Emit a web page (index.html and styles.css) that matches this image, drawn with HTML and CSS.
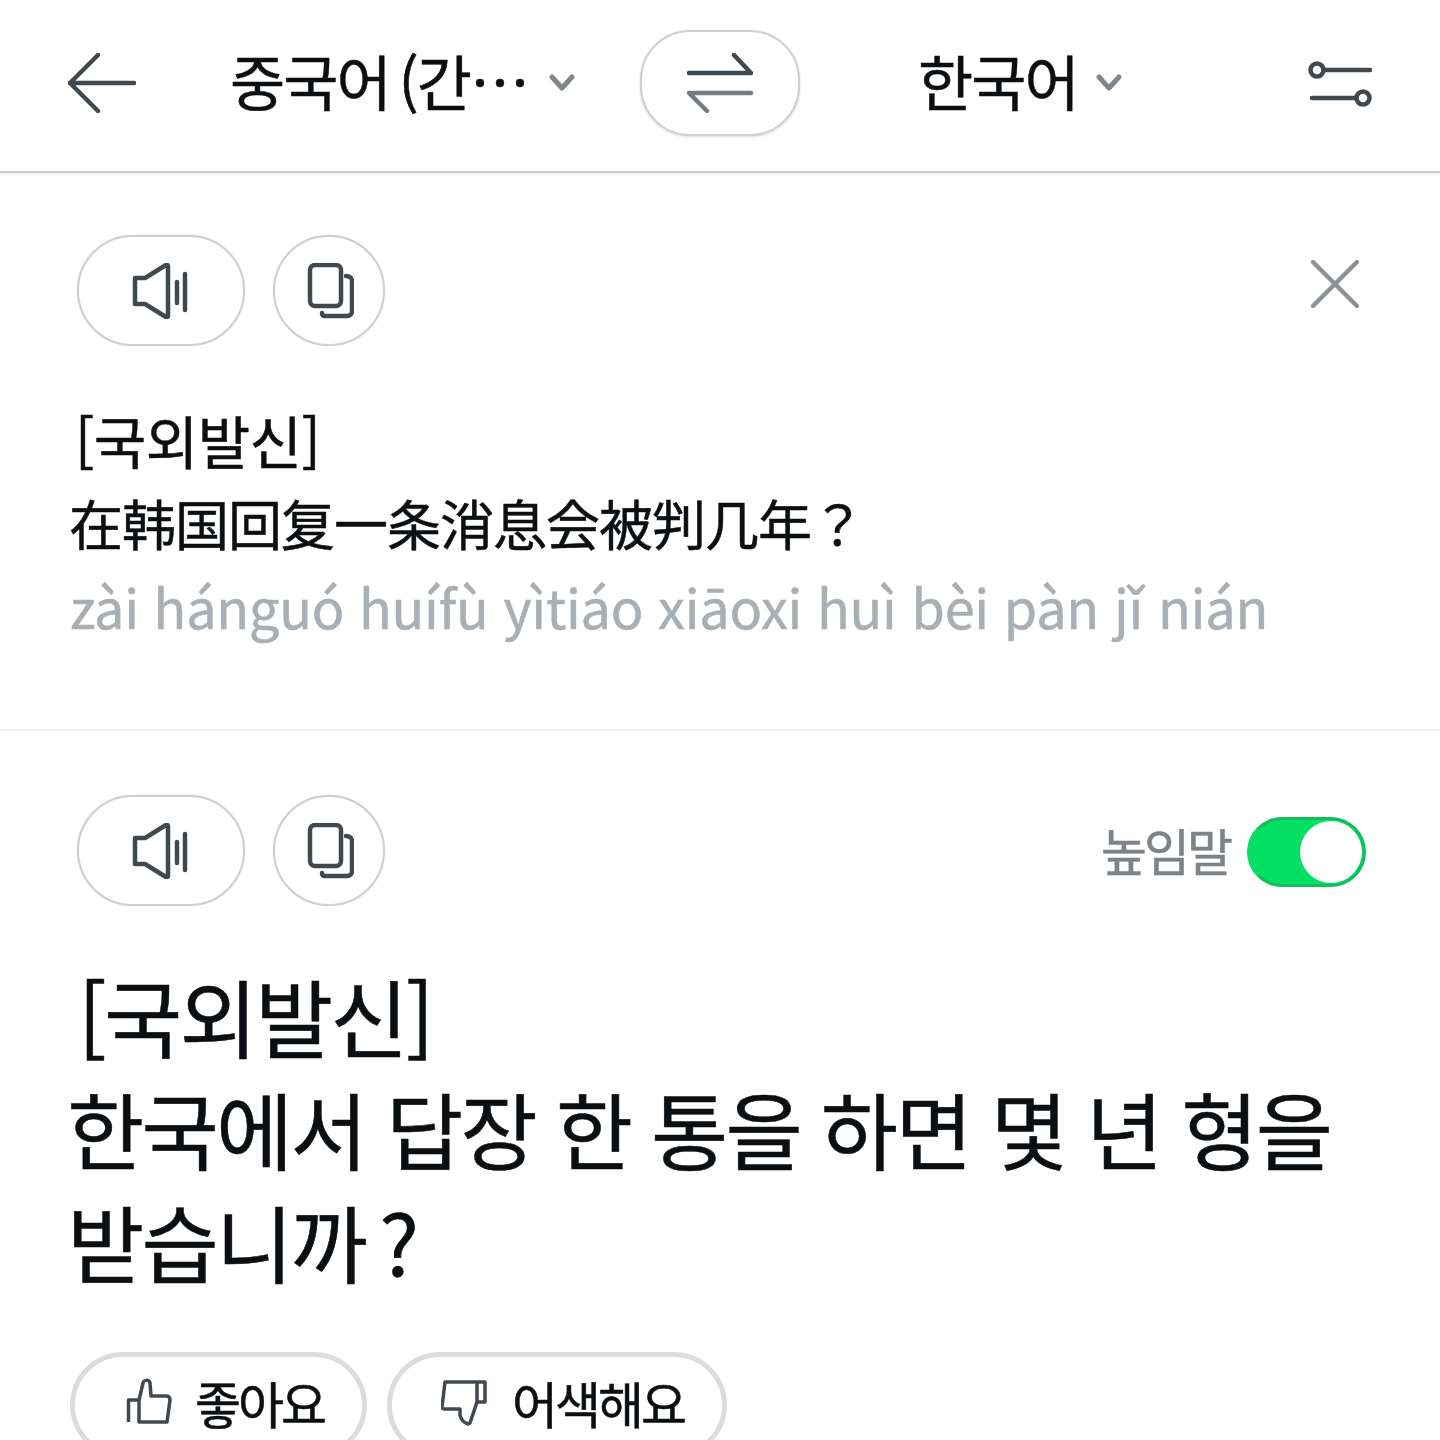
FILE: index.html
```html
<!DOCTYPE html>
<html lang="ko">
<head>
  <meta charset="UTF-8" />
  <meta name="viewport" content="width=device-width, initial-scale=1.0" />
  <title>번역</title>
  <link rel="stylesheet" href="styles.css">
</head>
<body>
  <div class="page">
    <header class="topbar">
      <svg class="back-icon" width="68" height="60" viewBox="0 0 68 60"><path d="M30 2 2 30l28 28M2 30h64"/></svg>
      <div class="lang lang-source">중국어 (간…</div>
      <svg class="chev chev-source" width="26" height="18" viewBox="0 0 26 18"><path d="M3 3l10 11L23 3"/></svg>
      <button class="swap-btn">
        <svg class="swap-icon" width="66" height="60" viewBox="0 0 66 60"><path class="dark" d="M2 20h62L47 2"/><path class="light" d="M64 40H2l18 18"/></svg>
      </button>
      <div class="lang lang-target">한국어</div>
      <svg class="chev chev-target" width="26" height="18" viewBox="0 0 26 18"><path d="M3 3l10 11L23 3"/></svg>
      <svg class="filter-icon" width="64" height="48" viewBox="0 0 64 48"><circle cx="9" cy="9" r="6.5"/><path d="M16 9h46M4 37h44"/><circle cx="55" cy="37" r="6.5"/></svg>
    </header>

    <section class="source">
      <div class="tools">
        <button class="round-btn wide">
          <svg width="58" height="56" viewBox="0 0 58 56"><path d="M3 15h10L34 2c1-.5 2 0 2 1v50c0 1-1 1.500-2 1L13 41H3z"/><path d="M45 19v21M53 11v36"/></svg>
        </button>
        <button class="round-btn">
          <svg width="50" height="56" viewBox="0 0 50 56"><rect x="6" y="2" width="31" height="41" rx="5"/><path d="M42 13c3 0 6 2 6 5v30c0 3-2 5-5 5H21c-2 0-3-1-3-3"/></svg>
        </button>
        <svg class="close-icon" width="48" height="48" viewBox="0 0 48 48"><path d="M2 2l44 44M46 2 2 46"/></svg>
      </div>
      <div class="source-text">
        <p class="tag">[국외발신]</p>
        <p class="hanzi">在韩国回复一条消息会被判几年？</p>
        <p class="pinyin">zài hánguó huífù yìtiáo xiāoxi huì bèi pàn jǐ nián</p>
      </div>
    </section>

    <section class="result">
      <div class="tools">
        <button class="round-btn wide">
          <svg width="58" height="56" viewBox="0 0 58 56"><path d="M3 15h10L34 2c1-.5 2 0 2 1v50c0 1-1 1.500-2 1L13 41H3z"/><path d="M45 19v21M53 11v36"/></svg>
        </button>
        <button class="round-btn">
          <svg width="50" height="56" viewBox="0 0 50 56"><rect x="6" y="2" width="31" height="41" rx="5"/><path d="M42 13c3 0 6 2 6 5v30c0 3-2 5-5 5H21c-2 0-3-1-3-3"/></svg>
        </button>
        <div class="honorific">
          <span>높임말</span>
          <div class="toggle"><div class="knob"></div></div>
        </div>
      </div>
      <div class="result-text">
        <p class="tag">[국외발신]</p>
        <p class="sentence">한국에서 답장 한 통을 하면 몇 년 형을 받습니까&#8201;?</p>
      </div>
      <div class="feedback">
        <button class="vote vote-good">
          <svg width="46" height="48" viewBox="0 0 46 48"><path d="M13 44V22L17 5c.5-3 6-4 7 0l1 13h15c3 0 4 2 4 4l-3 22zM2.500 44V22H13"/></svg>
          <span>좋아요</span>
        </button>
        <button class="vote vote-bad">
          <svg width="46" height="48" viewBox="0 0 46 48"><path d="M4 4L1 29c0 1 1 2 2 2h16v6c1 5 5 8 8 9l2-1 7-21V4zM36 24h8V4h-8"/></svg>
          <span>어색해요</span>
        </button>
      </div>
    </section>
  </div>
</body>
</html>
```
FILE: styles.css
```css
* {
  box-sizing: border-box;
  margin: 0;
  padding: 0;
  font-family: "Noto Sans CJK KR", "Noto Sans", sans-serif;
}

body {
  background: #fff;
  color: #0c0f11;
  -webkit-text-stroke: 0.5px currentColor;
}

.page {
  width: 1440px;
  height: 1440px;
  overflow: hidden;
}

svg {
  display: block;
  fill: none;
  stroke: #42494e;
  stroke-width: 4.5;
  stroke-linecap: round;
  stroke-linejoin: round;
}

button {
  background: #fff;
  color: inherit;
  font-weight: inherit;
  cursor: pointer;
}

.topbar {
  height: 173px;
  border-bottom: 2px solid #c9c9c9;
  box-shadow: 0 2px 4px rgba(0,0,0,0.05);
  display: flex;
  align-items: center;
  padding-left: 68px;
  padding-bottom: 6px;
}

.lang {
  font-size: 60px;
  line-height: 80px;
  letter-spacing: -2px;
  white-space: nowrap;
  margin-bottom: 6px;
}

.lang-source {
  margin-left: 94px;
  width: 291px;
  word-spacing: -6px;
}

.lang-target {
  margin-left: 118px;
  width: 178px;
}

.chev {
  stroke: #80878b;
  stroke-width: 5;
}

.chev-source {
  margin-left: 28px;
}

.swap-btn {
  width: 160px;
  height: 106px;
  margin-left: 65px;
  margin-top: 1px;
  border: 2px solid #cfcfcf;
  border-radius: 50px;
  box-shadow: 0 1px 3px rgba(0,0,0,0.15);
  display: flex;
  align-items: center;
  justify-content: center;
}

.swap-icon .light {
  stroke: #757c80;
}

.filter-icon {
  margin-left: 186px;
  margin-top: 4px;
}

.source {
  height: 558px;
  border-bottom: 2px solid #f0f0f0;
  padding: 62px 74px 0 70px;
}

.tools {
  display: flex;
  align-items: center;
  gap: 28px;
  padding-left: 7px;
}

.round-btn {
  width: 112px;
  height: 111px;
  border: 2px solid #cfcfcf;
  border-radius: 56px;
  box-shadow: 0 0 2px rgba(0,0,0,0.1);
  display: flex;
  align-items: center;
  justify-content: center;
}

.round-btn.wide {
  width: 168px;
}

.close-icon {
  margin-left: auto;
  margin-bottom: 14px;
  margin-right: 7px;
  stroke: #8b9194;
}

.source-text {
  margin-top: 52px;
  font-size: 54px;
  line-height: 83px;
}

.source-text .tag {
  font-size: 57px;
  letter-spacing: -0.5px;
  margin-left: 5px;
}

.hanzi {
  letter-spacing: -1px;
  margin-left: -1px;
}

.pinyin {
  color: #a9afb3;
  white-space: nowrap;
  letter-spacing: -0.25px;
}

.result {
  padding: 64px 74px 0 70px;
}

.honorific {
  margin-left: auto;
  display: flex;
  align-items: center;
  gap: 17px;
  color: #7e8387;
  font-size: 50px;
  letter-spacing: -3px;
}

.honorific span {
  margin-bottom: 4px;
}

.toggle {
  width: 119px;
  height: 70px;
  margin-top: 2px;
  border-radius: 35px;
  background: #03df62;
  border: 3px solid #10bf5c;
  border-left-color: #03df62;
  display: flex;
  align-items: center;
  justify-content: flex-end;
  padding-right: 1px;
}

.knob {
  width: 62px;
  height: 62px;
  border-radius: 50%;
  background: #fff;
}

.result-text {
  margin-top: 52px;
  font-size: 84px;
  line-height: 113px;
  letter-spacing: -2.75px;
}

.result-text .tag {
  font-size: 85px;
  margin-left: 8px;
}

.sentence {
  margin-left: -3px;
}

.feedback {
  margin-top: 55px;
  display: flex;
  gap: 20px;
}

.vote {
  height: 106px;
  border: 5px solid #dcdcdc;
  border-radius: 53px;
  display: flex;
  align-items: center;
  font-size: 50px;
  letter-spacing: -3px;
  padding-bottom: 6px;
}

.vote svg {
  stroke-width: 3.5;
  stroke-linecap: butt;
}

.vote-good {
  width: 297px;
  padding-left: 51px;
  gap: 23px;
}

.vote-bad {
  width: 340px;
  padding-left: 49px;
  gap: 25px;
}
```
